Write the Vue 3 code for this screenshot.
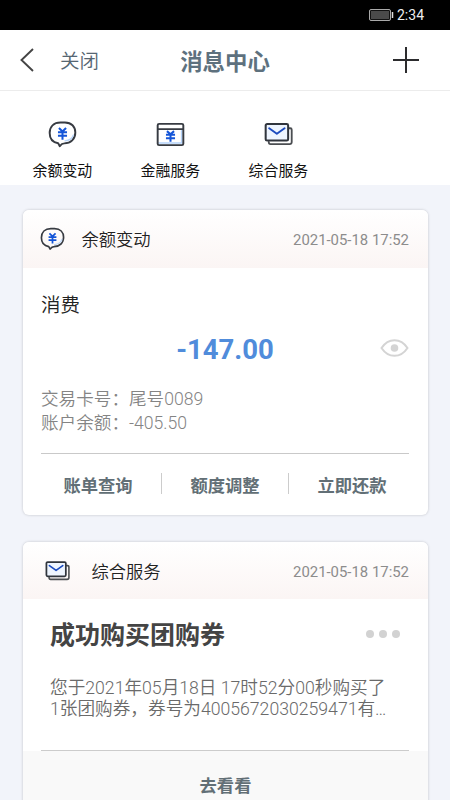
<script setup>
import { h } from 'vue'

const stroke = { fill: 'none', 'stroke-linecap': 'round', 'stroke-linejoin': 'round' }

const icons = {
  bubble: () =>
    h('svg', { viewBox: '0 0 30 28', ...stroke }, [
      h('path', { d: 'M13 1.500h4.500c6.700 0 10.800 4.300 10.800 10.500 0 6.800-4.700 11-11.500 11.200-1.800 0-3.200 1-4.600 2.900L10.500 23.100C5 22.200 1.700 18.400 1.700 12.500 1.700 5.800 6 1.500 13 1.500z', stroke: '#373b42', 'stroke-width': 2 }),
      h('path', { d: 'M26.200 14.500c-1 3.500-4 5.700-8.700 6', stroke: '#b9d5fa', 'stroke-width': 1.300 }),
      h('path', { d: 'M11.300 7.300l3.700 3.600 3.700-3.600M15 10.500v9M10.300 11.700h9.400M10.300 15.300h9.400', stroke: '#1455d8', 'stroke-width': 2.100, 'stroke-linecap': 'butt' })
    ]),
  finance: () =>
    h('svg', { viewBox: '0 0 30 28', ...stroke }, [
      h('path', { d: 'M3 22.800h24M26.500 10v12', stroke: '#b5d3fa', 'stroke-width': 1.500 }),
      h('rect', { x: 1.700, y: 3, width: 26.600, height: 22, rx: 1.500, stroke: '#373b42', 'stroke-width': 2 }),
      h('path', { d: 'M2 8.500h26', stroke: '#373b42', 'stroke-width': 1.800 }),
      h('path', { d: 'M11.300 10.500l3.700 3.300 3.700-3.300M15 13.500v8M10.300 14.300h9.400M10.300 17.800h9.400', stroke: '#1455d8', 'stroke-width': 2.100, 'stroke-linecap': 'butt' })
    ]),
  mail: () =>
    h('svg', { viewBox: '0 0 30 28', ...stroke }, [
      h('path', { d: 'M26 7.500h1.200q1.500 0 1.500 1.500v12.800q0 2.200-2.200 2.200H6.700Q4.900 24 4.900 21.800', stroke: '#4b4e52', 'stroke-width': 1.900 }),
      h('rect', { x: 1.700, y: 3.200, width: 23.300, height: 17.100, rx: 1.500, fill: '#eef5ff', stroke: '#30353d', 'stroke-width': 2.100 }),
      h('path', { d: 'M5.300 7.500l8 5.700 8-5.700', stroke: '#1c4bbf', 'stroke-width': 2 })
    ])
}

const tabs = [
  { icon: 'bubble', label: '余额变动' },
  { icon: 'finance', label: '金融服务' },
  { icon: 'mail', label: '综合服务' }
]
const actions = ['账单查询', '额度调整', '立即还款']
</script>

<template>
  <div class="screen">
    <div class="status">
      <svg class="battery" viewBox="0 0 25 12">
        <rect x=".5" y=".5" width="21" height="11" rx="1.500" fill="#111" stroke="#aaa" />
        <rect x="2" y="2" width="18" height="8" fill="#4a4a4a" />
        <path d="M23.500 3v6" stroke="#ddd" stroke-width="1.500" />
      </svg>
      <span>2:34</span>
    </div>

    <header class="nav">
      <div class="nav-left">
        <svg class="back" viewBox="0 0 14 24"><path d="M13 1L1.500 12 13 23" fill="none" stroke="#444" stroke-width="1.900" /></svg>
        <span class="close">关闭</span>
      </div>
      <h1>消息中心</h1>
      <div class="nav-right">
        <svg class="plus" viewBox="0 0 26 26"><path d="M13 0v26M0 13h26" stroke="#2c2c2e" stroke-width="2" /></svg>
      </div>
    </header>

    <nav class="tabs">
      <div v-for="t in tabs" :key="t.label" class="tab">
        <component :is="icons[t.icon]" class="tab-icon" />
        <span>{{ t.label }}</span>
      </div>
    </nav>

    <main class="list">
      <section class="card">
        <div class="card-head">
          <component :is="icons.bubble" class="head-icon" />
          <span class="head-title">余额变动</span>
          <time>2021-05-18 17:52</time>
        </div>
        <div class="balance">
          <div class="kind">消费</div>
          <div class="amount-row">
            <strong class="amount">-147.00</strong>
            <svg class="eye" viewBox="0 0 29 18">
              <path d="M1.500 9C5 3.700 9.300 1.200 14.500 1.200S24 3.700 27.500 9c-3.500 5.300-7.800 7.800-13 7.800S5 14.300 1.500 9z" fill="none" stroke="#d4d4d4" stroke-width="2" />
              <circle cx="14.500" cy="9" r="3.800" fill="#d4d4d4" />
            </svg>
          </div>
          <div class="details">
            <div>交易卡号：尾号0089</div>
            <div>账户余额：-405.50</div>
          </div>
          <div class="actions">
            <div v-for="a in actions" :key="a" class="action">{{ a }}</div>
          </div>
        </div>
      </section>

      <section class="card">
        <div class="card-head service">
          <component :is="icons.mail" class="head-icon" />
          <span class="head-title">综合服务</span>
          <time>2021-05-18 17:52</time>
        </div>
        <div class="notice">
          <div class="notice-top">
            <h2>成功购买团购券</h2>
            <div class="dots"><i></i><i></i><i></i></div>
          </div>
          <p>您于2021年05月18日 17时52分00秒购买了<br />1张团购券，券号为4005672030259471有…</p>
          <hr />
        </div>
        <div class="view">去看看</div>
      </section>
    </main>
  </div>
</template>

<style>
body {
  margin: 0;
  overflow: hidden;
}
</style>

<style scoped>
.screen {
  width: 450px;
  height: 800px;
  overflow: hidden;
  display: flex;
  flex-direction: column;
  background: #f2f4fa;
  font-family: Roboto, "Noto Sans CJK SC", sans-serif;
  white-space: nowrap;
}
.screen * {
  box-sizing: border-box;
}
.status {
  flex: none;
  height: 30px;
  padding: 0 26px 0 0;
  background: #000;
  color: #eee;
  display: flex;
  align-items: center;
  justify-content: flex-end;
  gap: 3px;
  font-size: 14px;
}
.battery {
  width: 25px;
  height: 12px;
}
.nav {
  flex: none;
  height: 61px;
  padding: 0 31px 0 20px;
  background: #fff;
  border-bottom: 1px solid #ececec;
  display: grid;
  grid-template-columns: 100px 1fr 89px;
  align-items: center;
}
.nav-left {
  display: flex;
  align-items: center;
  gap: 26px;
}
.back {
  width: 14px;
  height: 24px;
}
.close {
  padding-top: 3px;
  font-size: 19.5px;
  font-weight: 350;
  line-height: 28px;
  color: #566672;
}
h1 {
  margin: 0;
  padding-top: 3px;
  text-align: center;
  font-size: 22.4px;
  line-height: 32px;
  font-weight: 700;
  color: #5e717e;
}
.nav-right {
  display: flex;
  justify-content: flex-end;
}
.plus {
  width: 26px;
  height: 26px;
}
.tabs {
  flex: none;
  height: 94px;
  padding: 30px 0 0 8.4px;
  background: #fff;
  display: flex;
}
.tab {
  width: 108px;
  display: flex;
  flex-direction: column;
  align-items: center;
  gap: 12px;
  font-size: 14.9px;
  line-height: 22px;
  color: #111;
}
.tab-icon {
  width: 29px;
  height: 27px;
}
.list {
  padding: 25px 22px 0 23px;
  display: flex;
  flex-direction: column;
  gap: 27px;
}
.card {
  flex: none;
  border-radius: 6px;
  background: #fff;
  box-shadow: 0 0 3px rgba(0, 0, 0, 0.2);
  overflow: hidden;
}
.card-head {
  height: 58px;
  padding: 0 19px 0 17px;
  display: flex;
  align-items: center;
  background: linear-gradient(#fff, #fbf5f4);
}
.head-icon {
  width: 25px;
  height: 24px;
}
.head-title {
  flex: 1;
  margin-left: 16.5px;
  padding-top: 2px;
  font-size: 17.3px;
  line-height: 26px;
  font-weight: 350;
  color: #222;
}
.service {
  height: 57px;
  padding-left: 22px;
}
.service .head-title {
  margin-left: 21.5px;
}
time {
  padding-top: 2px;
  font-size: 14.9px;
  line-height: 20px;
  font-weight: 400;
  color: #8c8c8c;
}
.balance {
  height: 247px;
  padding: 23px 19px 0 18px;
}
.kind {
  font-size: 19.5px;
  line-height: 30px;
  font-weight: 350;
  color: #222;
}
.amount-row {
  height: 58px;
  display: grid;
  grid-template-columns: 29px 1fr 29px;
  align-items: center;
}
.amount {
  grid-column: 2;
  text-align: center;
  font-size: 27.5px;
  line-height: 34px;
  font-weight: 700;
  color: #508cdb;
}
.eye {
  width: 29px;
  height: 18px;
  margin-top: -4px;
}
.details {
  padding-top: 8px;
  height: 74px;
  font-size: 17.6px;
  line-height: 24px;
  font-weight: 350;
  color: #848484;
}
.actions {
  border-top: 1px solid #c9c9c9;
  padding-top: 19px;
  display: grid;
  grid-template-columns: 120px 127px 1fr;
}
.action {
  height: 21px;
  padding-top: 4px;
  display: flex;
  align-items: center;
  justify-content: center;
  border-left: 1px solid #ccc;
  font-size: 17.3px;
  line-height: 26px;
  font-weight: 700;
  color: #626f76;
}
.action:first-child {
  border-left: 0;
  padding-right: 6px;
}
.action:last-child {
  padding-left: 6px;
}
.notice {
  height: 152px;
  padding: 19px 28px 0 27px;
  display: flex;
  flex-direction: column;
}
.notice-top {
  display: flex;
  align-items: center;
  justify-content: space-between;
}
h2 {
  margin: 0;
  font-size: 25px;
  line-height: 36px;
  font-weight: 700;
  color: #444;
}
.dots {
  display: flex;
  gap: 5px;
  padding-bottom: 4px;
}
.dots i {
  width: 8px;
  height: 8px;
  border-radius: 50%;
  background: #d2d2d2;
}
p {
  margin: 24px 0 0;
  font-size: 17.65px;
  line-height: 21px;
  font-weight: 350;
  color: #6a6a6a;
}
hr {
  margin: auto -9px 0;
  border: 0;
  height: 1px;
  background: #ccc;
}
.view {
  height: 80px;
  padding-top: 22px;
  text-align: center;
  font-size: 17.3px;
  line-height: 26px;
  font-weight: 700;
  color: #626f76;
  background: #f9f9f9;
}
</style>
